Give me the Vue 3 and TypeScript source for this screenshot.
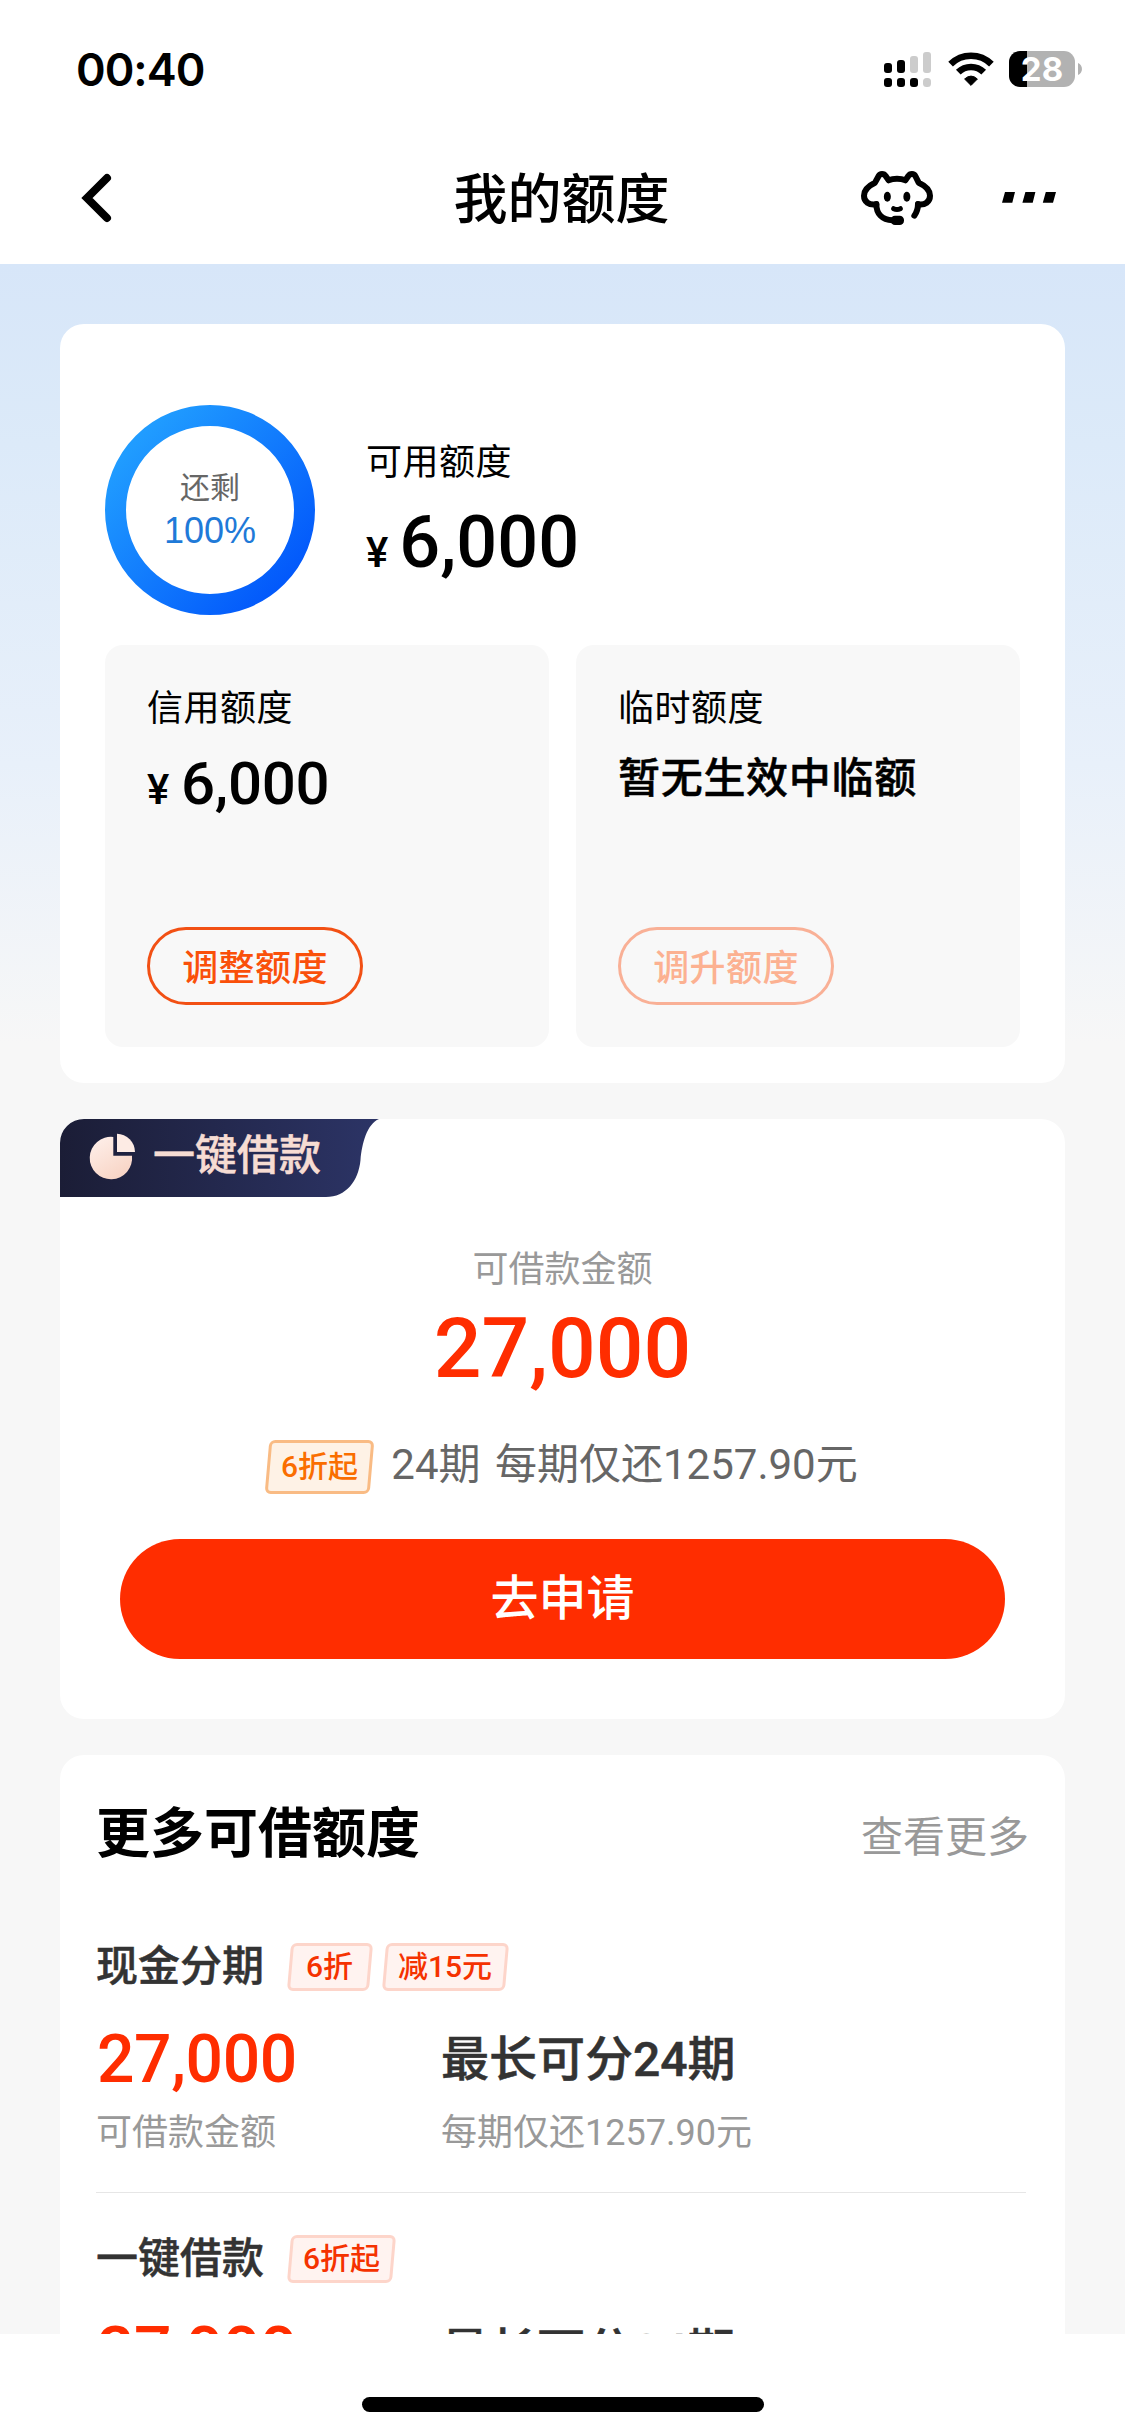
<script setup lang="ts">
interface LoanItem {
  name: string
  tags: string[]
  amount: string
  term: string
  amountNote?: string
  termNote?: string
}

const items: LoanItem[] = [
  {
    name: '现金分期',
    tags: ['6折', '减15元'],
    amount: '27,000',
    term: '最长可分24期',
    amountNote: '可借款金额',
    termNote: '每期仅还1257.90元',
  },
  { name: '一键借款', tags: ['6折起'], amount: '27,000', term: '最长可分24期' },
]
</script>

<template>
  <div class="screen">
    <header class="top">
      <div class="status">
        <span class="time">00:40</span>
        <div class="status-icons">
          <svg class="signal" width="47" height="36" viewBox="0 0 47 36">
            <rect x="0" y="12" width="8" height="10" rx="3" />
            <rect x="13" y="9" width="8" height="13" rx="3" />
            <rect class="dim" x="26" y="5" width="8" height="17" rx="3" />
            <rect class="dim" x="39" y="1" width="8" height="21" rx="3" />
            <rect x="0" y="27" width="8" height="9" rx="3" />
            <rect x="13" y="27" width="8" height="9" rx="3" />
            <rect x="26" y="27" width="8" height="9" rx="3" />
            <rect class="dim" x="39" y="27" width="8" height="9" rx="3.5" />
          </svg>
          <svg class="wifi" width="46" height="34" viewBox="0 0 46 34">
            <g fill="none" stroke="#000" stroke-width="6.6">
              <path d="M2.6 12.2A29 29 0 0 1 43.4 12.2" />
              <path d="M10.3 20.2A18 18 0 0 1 35.7 20.2" />
            </g>
            <path d="M23 33.4L16.6 27Q23 21.2 29.4 27Z" stroke="#000" stroke-width="1" stroke-linejoin="round" />
          </svg>
          <div class="battery"><span>28</span></div>
          <svg class="nub" width="4" height="12" viewBox="0 0 4 12"><path d="M0 0C5.3 2 5.3 10 0 12Z" fill="#b2b2b2" /></svg>
        </div>
      </div>
      <nav class="nav">
        <svg class="back" width="32" height="50" viewBox="0 0 32 50">
          <path d="M27 5L7 25L27 45" fill="none" stroke="#000" stroke-width="8" stroke-linecap="round" />
        </svg>
        <h1>我的额度</h1>
        <div class="nav-actions">
          <svg class="service" width="72" height="54" viewBox="63 453 216 162">
            <g fill="none" stroke="#000" stroke-width="18" stroke-linecap="round" stroke-linejoin="round">
              <path d="M109 553C87 557 72 545 72 527C72 510 84 498 105 488L116 468C120 460 132 460 137 468L146 481C160 475 182 475 196 481L205 468C210 460 222 460 226 468L236 488C258 498 270 510 270 527C270 545 255 557 234 553" />
              <path d="M109 552C109 580 125 600 158 601" />
              <path d="M234 552Q234 572 223 587" />
              <path d="M161 566Q171 571 181 566" stroke-width="15" />
            </g>
            <rect x="152" y="587" width="40" height="28" rx="13" />
            <ellipse cx="142" cy="530" rx="10.5" ry="15" />
            <ellipse cx="200.5" cy="530" rx="10.5" ry="15" />
          </svg>
          <svg class="more-dots" width="54" height="11" viewBox="0 0 54 11">
            <path d="M3 0H13L10.3 10.7H0ZM23.4 0H33.4L30.7 10.7H20.4ZM43.8 0H54L51 10.7H40.8Z" />
          </svg>
        </div>
      </nav>
    </header>

    <main class="body">
      <section class="card quota">
        <div class="overview">
          <div class="ring">
            <svg class="ring-arc" width="210" height="210" viewBox="0 0 210 210">
              <defs>
                <linearGradient id="ringFill" x1="0.1" y1="0.15" x2="0.9" y2="0.9">
                  <stop offset="0" stop-color="#209cff" />
                  <stop offset="1" stop-color="#0258fb" />
                </linearGradient>
              </defs>
              <circle cx="105" cy="105" r="94.5" fill="none" stroke="url(#ringFill)" stroke-width="21" />
            </svg>
            <span class="ring-label">还剩</span>
            <span class="ring-value">100%</span>
          </div>
          <div class="overview-info">
            <div class="label">可用额度</div>
            <div class="money money-lg"><i>¥</i>6,000</div>
          </div>
        </div>
        <div class="panels">
          <div class="panel">
            <div class="label">信用额度</div>
            <div class="money"><i>¥</i>6,000</div>
            <button class="pill">调整额度</button>
          </div>
          <div class="panel">
            <div class="label">临时额度</div>
            <div class="empty">暂无生效中临额</div>
            <button class="pill disabled">调升额度</button>
          </div>
        </div>
      </section>

      <section class="card loan">
        <div class="ribbon">
          <svg class="ribbon-shape" width="322" height="78" viewBox="0 0 322 78">
            <defs>
              <linearGradient id="ribbonFill" x1="0" y1="0" x2="1" y2="0">
                <stop offset="0" stop-color="#1b1d36" />
                <stop offset="1" stop-color="#2c3466" />
              </linearGradient>
              <linearGradient id="pieFill" x1="0" y1="0" x2="0.6" y2="1">
                <stop offset="0" stop-color="#fff1ec" />
                <stop offset="1" stop-color="#f8d5c6" />
              </linearGradient>
            </defs>
            <path d="M0 78V24A24 24 0 0 1 24 0H319C307 5 302 24 300.500 41C298.500 62 286 78 266 78Z" fill="url(#ribbonFill)" />
            <path d="M53.3 18A21.2 21.2 0 1 0 72 36.7H53.3Z" fill="url(#pieFill)" />
            <path d="M57 14.8A18.3 18.3 0 0 1 75 33H57Z" fill="#fdebe4" />
          </svg>
          <span>一键借款</span>
        </div>
        <div class="loan-label">可借款金额</div>
        <div class="loan-amount">27,000</div>
        <div class="loan-terms">
          <span class="tag orange"><b>6折起</b></span>
          <span class="terms-text">24期 每期仅还1257.90元</span>
        </div>
        <button class="apply">去申请</button>
      </section>

      <section class="card more">
        <div class="more-head">
          <h2>更多可借额度</h2>
          <a>查看更多</a>
        </div>
        <article v-for="item in items" :key="item.name" class="item">
          <div class="item-head">
            <h3>{{ item.name }}</h3>
            <span v-for="tag in item.tags" :key="tag" class="tag"><b>{{ tag }}</b></span>
          </div>
          <div class="item-row">
            <div class="item-amount">
              <strong>{{ item.amount }}</strong>
              <small v-if="item.amountNote">{{ item.amountNote }}</small>
            </div>
            <div class="item-term">
              <strong>{{ item.term }}</strong>
              <small v-if="item.termNote">{{ item.termNote }}</small>
            </div>
          </div>
        </article>
      </section>
    </main>

    <footer class="home"><div class="home-bar"></div></footer>
  </div>
</template>

<style>
body {
  margin: 0;
  background: #fff;
}
</style>

<style scoped>
.screen {
  width: 1125px;
  height: 2436px;
  display: flex;
  flex-direction: column;
  overflow: hidden;
  background: #fff;
  color: #000;
  font-family: Roboto, 'Noto Sans CJK SC', sans-serif;
}
.screen * {
  box-sizing: border-box;
}
h1, h2, h3 {
  margin: 0;
  font-weight: 500;
}
button {
  font-family: inherit;
  padding: 0;
}
.top {
  height: 264px;
  flex: none;
}
.status {
  height: 132px;
  display: flex;
  justify-content: space-between;
  padding: 0 43px 0 76px;
}
.time {
  margin-top: 43px;
  font: 600 45px/54px Inter, sans-serif;
  letter-spacing: -1px;
}
.status-icons {
  display: flex;
  align-items: flex-start;
  padding-top: 51px;
}
.dim {
  fill: #ccc;
}
.wifi {
  margin: 1px 15px 0 17px;
}
.battery {
  width: 66px;
  height: 36px;
  border-radius: 11px;
  background: linear-gradient(90deg, #000 18px, #b2b2b2 18px);
  color: #fff;
  text-align: center;
  font: 700 33px/36px Inter, sans-serif;
}
.nub {
  margin: 12px 0 0 3px;
}
.nav {
  height: 132px;
  display: grid;
  grid-template-columns: 1fr auto 1fr;
  align-items: center;
  padding: 0 69px 0 80px;
}
.back {
  margin-top: -1px;
}
.nav h1 {
  margin: 5px 0 0 -13px;
  font-size: 54px;
  line-height: 72px;
}
.nav-actions {
  display: flex;
  justify-content: flex-end;
  align-items: center;
}
.more-dots {
  margin: -2px 0 0 69px;
}
.body {
  height: 2070px;
  flex: none;
  overflow: hidden;
  padding: 60px 60px 0;
  display: flex;
  flex-direction: column;
  gap: 36px;
  background: linear-gradient(180deg, #d7e6f9 0, #dceaf9 180px, #e8f0fa 500px, #f7f7f7 780px);
}
.card {
  flex: none;
  border-radius: 24px;
  background: #fff;
}
.quota {
  height: 759px;
  padding: 81px 45px 36px;
}
.overview {
  display: flex;
  height: 210px;
  margin-bottom: 30px;
}
.ring {
  position: relative;
  width: 210px;
  display: flex;
  flex-direction: column;
  align-items: center;
  justify-content: center;
}
.ring-arc {
  position: absolute;
  inset: 0;
}
.ring-label {
  font-size: 30px;
  line-height: 38px;
  color: #666;
}
.ring-value {
  margin-top: 3px;
  font: 36px/42px 'Liberation Sans', sans-serif;
  color: #1f7ad8;
}
.overview-info {
  padding: 37px 0 0 51px;
}
.label {
  font-size: 36px;
  line-height: 42px;
  letter-spacing: 0.5px;
}
.money {
  margin-top: 18px;
  font-size: 60px;
  line-height: 72px;
  font-weight: 500;
  letter-spacing: -0.3px;
}
.money i {
  font-style: normal;
  font-size: 42px;
  margin-right: 12px;
}
.money-lg {
  margin-top: 17px;
  font-size: 72px;
  line-height: 84px;
  letter-spacing: 0;
}
.money-lg i {
  margin-right: 11px;
}
.panels {
  display: flex;
  gap: 27px;
}
.panel {
  flex: 1;
  height: 402px;
  display: flex;
  flex-direction: column;
  align-items: flex-start;
  padding: 43px 42px 42px;
  border-radius: 18px;
  background: #f8f8f8;
}
.empty {
  margin-top: 13px;
  font-size: 42px;
  line-height: 72px;
  font-weight: 500;
  letter-spacing: 0.7px;
  -webkit-text-stroke: 0.5px currentColor;
}
.pill {
  width: 216px;
  height: 78px;
  margin-top: auto;
  padding-top: 6px;
  border: 3px solid #f25014;
  border-radius: 39px;
  background: none;
  color: #fa500a;
  font-size: 36px;
  line-height: 66px;
  font-weight: 500;
  letter-spacing: 0.4px;
}
.pill.disabled {
  border-color: #f9b096;
  color: #fcb191;
}
.loan {
  height: 600px;
  padding: 0 60px;
  display: flex;
  flex-direction: column;
  align-items: center;
}
.ribbon {
  position: relative;
  align-self: flex-start;
  width: 322px;
  height: 78px;
  margin-left: -60px;
  padding-left: 93px;
  font-size: 42px;
  line-height: 74px;
  font-weight: 500;
  color: #f6dcd3;
  -webkit-text-stroke: 0.5px currentColor;
}
.ribbon-shape {
  position: absolute;
  inset: 0;
}
.ribbon span {
  position: relative;
}
.loan-label {
  margin-top: 52px;
  font-size: 36px;
  line-height: 42px;
  color: #999;
}
.loan-amount {
  margin-top: 10px;
  font-size: 84px;
  line-height: 96px;
  font-weight: 500;
  color: #ff2d00;
}
.loan-terms {
  height: 54px;
  margin-top: 43px;
  display: flex;
  gap: 19px;
}
.terms-text {
  font-size: 42px;
  line-height: 49px;
  word-spacing: 4px;
  color: #666;
}
.tag {
  min-width: 82px;
  height: 48px;
  padding: 0 11px;
  border: 3px solid #fdd5ca;
  border-radius: 6px;
  background: #fff3f0;
  color: #f53200;
  font-size: 30px;
  line-height: 42px;
  text-align: center;
  transform: skewX(-5deg);
}
.tag b {
  display: inline-block;
  font-weight: 500;
  transform: skewX(5deg);
}
.tag + .tag {
  min-width: 123px;
}
.tag.orange {
  height: 54px;
  border-color: #f9bb84;
  background: #fef2e6;
  color: #fa6e00;
  line-height: 47px;
}
.apply {
  width: 885px;
  height: 120px;
  margin-top: 45px;
  border: 0;
  border-radius: 60px;
  background: #ff2d00;
  color: #fff;
  font-size: 48px;
  line-height: 120px;
  font-weight: 500;
}
.more {
  padding: 43px 36px 0;
}
.more-head {
  height: 72px;
  margin-bottom: 73px;
  display: flex;
  justify-content: space-between;
}
.more-head h2 {
  font-size: 54px;
  line-height: 73px;
  font-weight: 700;
}
.more-head a {
  font-size: 42px;
  line-height: 80px;
  color: #999;
}
.item {
  width: 930px;
  padding-bottom: 41px;
  margin-bottom: 42px;
  border-bottom: 1px solid #e6e6e6;
}
.item-head {
  display: flex;
  height: 48px;
}
.item-head h3 {
  margin-right: 12px;
  font-size: 42px;
  line-height: 48px;
  color: #333;
  -webkit-text-stroke: 0.5px currentColor;
}
.item-head .tag {
  margin-left: 13px;
}
.item-row {
  display: flex;
  margin-top: 33px;
}
.item-amount {
  width: 345px;
}
.item-row strong,
.item-row small {
  display: block;
}
.item-row strong {
  font-weight: 500;
  line-height: 72px;
}
.item-amount strong {
  padding-left: 1px;
  font-size: 66px;
  letter-spacing: -0.4px;
  color: #ff2d00;
}
.item-term strong {
  font-size: 48px;
  color: #333;
  -webkit-text-stroke: 0.5px currentColor;
}
.item-row small {
  margin-top: 19px;
  font-size: 36px;
  line-height: 36px;
  color: #999;
}
.home {
  height: 102px;
  flex: none;
  display: flex;
  justify-content: center;
  padding-top: 63px;
}
.home-bar {
  width: 402px;
  height: 15px;
  border-radius: 8px;
  background: #000;
}
</style>
